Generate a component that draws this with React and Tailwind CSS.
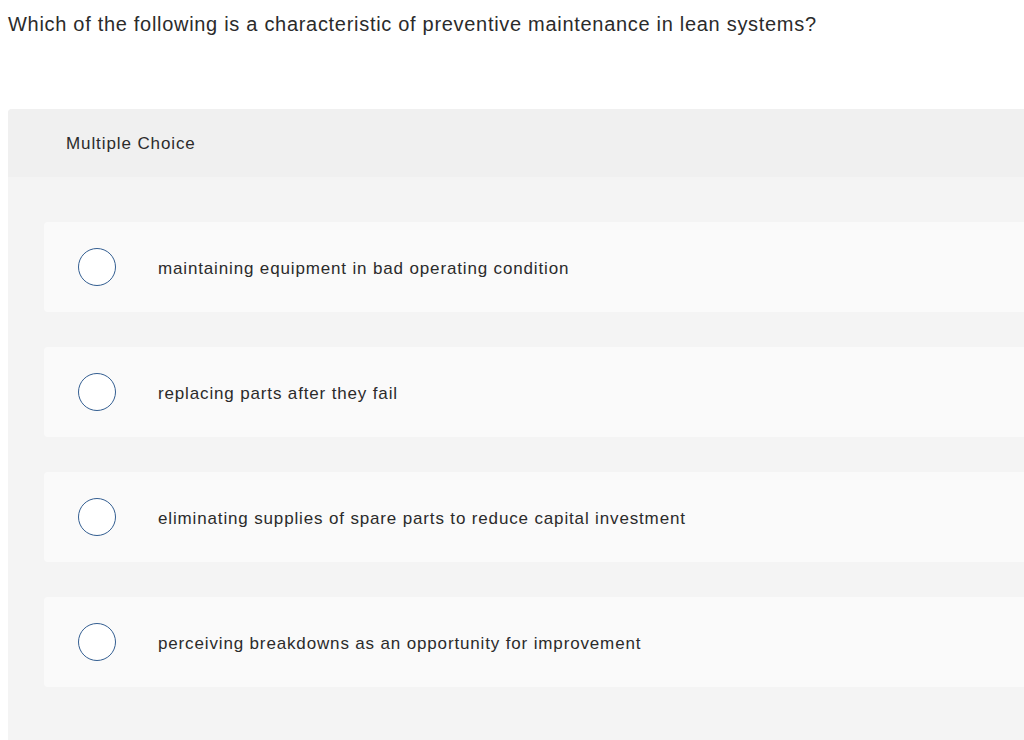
import React from 'react'

const choices = [
    "maintaining equipment in bad operating condition",
    "replacing parts after they fail",
    "eliminating supplies of spare parts to reduce capital investment",
    "perceiving breakdowns as an opportunity for improvement",
]

export default function App() {
    return (
        <div className="w-[1024px] h-[740px] overflow-hidden bg-white text-[#2b2b2b] font-['Liberation_Sans',Arial,sans-serif]">
            {/* Question prompt */}
            <p className="pl-2 pt-[12px] text-[20px] leading-[24px] tracking-[0.7px]">
                Which of the following is a characteristic of preventive maintenance in lean systems?
            </p>

            <section className="ml-2 mt-[73px] rounded-tl bg-[#f4f4f4] pb-[60px]">
                <div className="h-[68px] flex items-center pl-[58px] bg-[#f0f0f0] rounded-tl text-[17px] tracking-[0.9px] pt-[2px]">
                    Multiple Choice
                </div>

                <div className="pt-[45px] pl-9 flex flex-col gap-[35px]">
                    {choices.map((text) => (
                        <label key={text} className="h-[90px] flex items-center bg-[#fafafa] rounded-l">
                            <span className="ml-[34px] w-[38px] h-[38px] rounded-full border-[1.5px] border-[#335e91] bg-white shrink-0"></span>
                            <span className="ml-[42px] text-[17px] tracking-[0.85px] pt-[3px]">{text}</span>
                        </label>
                    ))}
                </div>
            </section>
        </div>
    )
}
